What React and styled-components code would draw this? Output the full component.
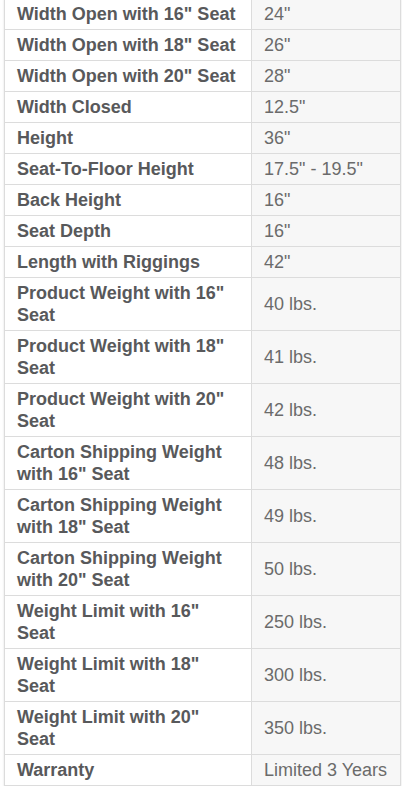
import React from "react";
import styled, { createGlobalStyle } from "styled-components";

const Global = createGlobalStyle`
  html, body { margin: 0; padding: 0; background: #ffffff; }
  body { font-family: "Liberation Sans", Arial, Helvetica, sans-serif; }
`;

const Page = styled.div`
  padding: 0 1px 0 4px;
  margin-top: -2px;
`;

const Table = styled.table`
  width: 397px;
  table-layout: fixed;
  border-collapse: collapse;
  border: 1px solid #dcdcdc;
  box-shadow: 0 1px 2px rgba(0, 0, 0, 0.12);
  font-size: 18px;
  line-height: 22px;
`;

const Row = styled.tr`
  border-bottom: 1px solid #dcdcdc;
`;

const Label = styled.th`
  width: 222px;
  padding: 4px 12px;
  text-align: left;
  vertical-align: middle;
  font-weight: 700;
  color: #58595b;
  background: #ffffff;
  border-right: 1px solid #dcdcdc;
`;

const Value = styled.td`
  padding: 4px 12px;
  vertical-align: middle;
  font-weight: 400;
  color: #6b6b6b;
  background: #f7f7f7;
  white-space: nowrap;
`;

const specs = [
  ["Width Open with 16\" Seat", "24\""],
  ["Width Open with 18\" Seat", "26\""],
  ["Width Open with 20\" Seat", "28\""],
  ["Width Closed", "12.5\""],
  ["Height", "36\""],
  ["Seat-To-Floor Height", "17.5\" - 19.5\""],
  ["Back Height", "16\""],
  ["Seat Depth", "16\""],
  ["Length with Riggings", "42\""],
  ["Product Weight with 16\" Seat", "40 lbs."],
  ["Product Weight with 18\" Seat", "41 lbs."],
  ["Product Weight with 20\" Seat", "42 lbs."],
  ["Carton Shipping Weight with 16\" Seat", "48 lbs."],
  ["Carton Shipping Weight with 18\" Seat", "49 lbs."],
  ["Carton Shipping Weight with 20\" Seat", "50 lbs."],
  ["Weight Limit with 16\" Seat", "250 lbs."],
  ["Weight Limit with 18\" Seat", "300 lbs."],
  ["Weight Limit with 20\" Seat", "350 lbs."],
  ["Warranty", "Limited 3 Years"],
];

export default function App() {
  return (
    <>
      <Global />
      <Page>
        <Table>
          <tbody>
            {specs.map(([label, value]) => (
              <Row key={label}>
                <Label scope="row">{label}</Label>
                <Value>{value}</Value>
              </Row>
            ))}
          </tbody>
        </Table>
      </Page>
    </>
  );
}
